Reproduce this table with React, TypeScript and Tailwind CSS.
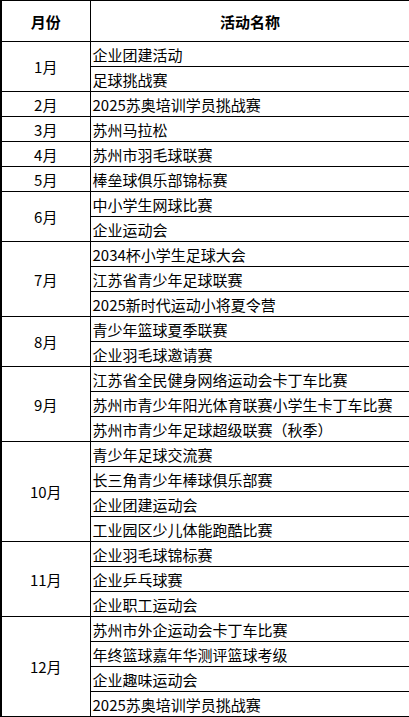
const SCHEDULE: { month: string; events: string[] }[] = [
  { month: "1月", events: ["企业团建活动", "足球挑战赛"] },
  { month: "2月", events: ["2025苏奥培训学员挑战赛"] },
  { month: "3月", events: ["苏州马拉松"] },
  { month: "4月", events: ["苏州市羽毛球联赛"] },
  { month: "5月", events: ["棒垒球俱乐部锦标赛"] },
  { month: "6月", events: ["中小学生网球比赛", "企业运动会"] },
  { month: "7月", events: ["2034杯小学生足球大会", "江苏省青少年足球联赛", "2025新时代运动小将夏令营"] },
  { month: "8月", events: ["青少年篮球夏季联赛", "企业羽毛球邀请赛"] },
  {
    month: "9月",
    events: ["江苏省全民健身网络运动会卡丁车比赛", "苏州市青少年阳光体育联赛小学生卡丁车比赛", "苏州市青少年足球超级联赛（秋季）"],
  },
  { month: "10月", events: ["青少年足球交流赛", "长三角青少年棒球俱乐部赛", "企业团建运动会", "工业园区少儿体能跑酷比赛"] },
  { month: "11月", events: ["企业羽毛球锦标赛", "企业乒乓球赛", "企业职工运动会"] },
  { month: "12月", events: ["苏州市外企运动会卡丁车比赛", "年终篮球嘉年华测评篮球考级", "企业趣味运动会", "2025苏奥培训学员挑战赛"] },
];

export default function App() {
  return (
    <div className="w-[409px] h-[717px] bg-white text-black font-['Noto_Sans_CJK_SC',sans-serif] text-[15px]">
      <table className="table-fixed border-collapse w-[409px]">
        <colgroup>
          <col className="w-[89px]" />
          <col className="w-[320px]" />
        </colgroup>
        <thead>
          <tr className="h-[41px]">
            <th className="border border-black border-l-2 font-bold text-center p-0 leading-none">月份</th>
            <th className="border border-black font-bold text-center p-0 leading-none">活动名称</th>
          </tr>
        </thead>
        <tbody>
          {SCHEDULE.map((g) =>
            g.events.map((ev, i) => (
              <tr key={`${g.month}-${i}`} className="h-[25px]">
                {i === 0 && (
                  <td rowSpan={g.events.length} className="border border-black border-l-2 text-center p-0 leading-none">
                    {g.month}
                  </td>
                )}
                <td className="border border-black pl-[2px] p-0 leading-none whitespace-nowrap">{ev}</td>
              </tr>
            ))
          )}
        </tbody>
      </table>
    </div>
  );
}
